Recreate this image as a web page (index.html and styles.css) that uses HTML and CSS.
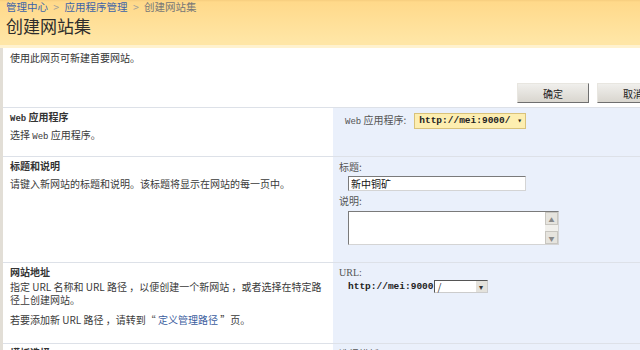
FILE: index.html
```html
<!DOCTYPE html>
<html>
    <head>
        <meta charset="utf-8" />
        <link rel="stylesheet" href="styles.css">
    </head>
    <body>
        <div id="header">
            <div id="crumbs">
                <a href="#">管理中心</a> <span class="sep">&gt;</span>
                <a href="#">应用程序管理</a> <span class="sep">&gt;</span>
                <span class="here">创建网站集</span>
            </div>
            <h1>创建网站集</h1>
        </div>
        <div id="page">
            <p class="intro">使用此网页可新建首要网站。</p>
            <div class="actions">
                <button class="btn">确定</button>
                <button class="btn">取消</button>
            </div>

            <div class="section s1">
                <div class="info">
                    <div class="title"><span class="lat">Web</span> 应用程序</div>
                    <div class="desc">选择 <span class="lat">Web</span> 应用程序。</div>
                </div>
                <div class="field">
                    <div class="inline">
                        <span class="lbl"><span class="lat">Web</span> 应用程序:</span>
                        <span class="picker">http://mei:9000/ <span class="caret">▾</span></span>
                    </div>
                </div>
            </div>

            <div class="section s2">
                <div class="info">
                    <div class="title">标题和说明</div>
                    <div class="desc">请键入新网站的标题和说明。该标题将显示在网站的每一页中。</div>
                </div>
                <div class="field">
                    <div class="lbl">标题:</div>
                    <input class="text" type="text" value="新中铜矿" />
                    <div class="lbl">说明:</div>
                    <div class="area">
                        <div class="area-body"></div>
                        <div class="scroll">
                            <span class="sbtn">▲</span>
                            <span class="sbtn">▼</span>
                        </div>
                    </div>
                </div>
            </div>

            <div class="section s3">
                <div class="info">
                    <div class="title">网站地址</div>
                    <div class="desc">指定 URL 名称和 URL 路径 ，以便创建一个新网站 ，或者选择在特定路径上创建网站。</div>
                    <div class="desc more">若要添加新 URL 路径 ，请转到“ <a href="#">定义管理路径</a> ”页。</div>
                </div>
                <div class="field">
                    <div class="lbl">URL:</div>
                    <div class="url">
                        <span class="host">http://mei:9000</span><span class="path">/<span class="drop">▾</span></span>
                    </div>
                </div>
            </div>

            <div class="section s4">
                <div class="info">
                    <div class="title">模板选择</div>
                </div>
                <div class="field">
                    <div class="lbl">选择模板:</div>
                </div>
            </div>
        </div>
    </body>
</html>
```

FILE: styles.css
```css
html {
    overflow: hidden;
}
body {
    margin: 0;
    background-color: #fff;
    color: #333;
    font-family: "Noto Sans CJK SC", "DejaVu Sans", sans-serif;
    font-size: 10px;
}
a {
    color: #3b5d9e;
    text-decoration: none;
}

/* Header band */
#header {
    height: 45px;
    padding: 0 0 0 6px;
    background: linear-gradient(#f6cd7e 0, #ffd98a 2px, #ffe6a6 42px);
    border-bottom: 3px solid #fff2cf;
}
#crumbs {
    height: 14px;
    line-height: 14px;
    font-size: 10.5px;
    color: #7a7a7a;
}
#crumbs a {
    color: #3d63a8;
}
#crumbs .sep {
    color: #9a9a9a;
    margin: 0 3px;
}
#crumbs .here {
    color: #777;
}
h1 {
    margin: 0;
    font-size: 17px;
    font-weight: normal;
    line-height: 24px;
    color: #2d2d2d;
}

#page {
    border-left: 3px solid #e2ded6;
}
.intro {
    margin: 0;
    padding: 3px 0 0 7px;
    height: 22px;
    line-height: 14px;
}
.lat {
    font-family: "Liberation Mono", monospace;
    font-size: 9px;
}

/* Buttons */
.actions {
    display: flex;
    gap: 8px;
    padding: 10px 0 0 514px;
    height: 24px;
}
.btn {
    flex: none;
    width: 72px;
    height: 20px;
    padding: 0;
    font-family: inherit;
    font-size: 10px;
    color: #222;
    background: linear-gradient(#f0efec, #d9d6cf);
    border: 1px solid;
    border-color: #e8e6e0 #6f6f6f #6f6f6f #e8e6e0;
}

/* Sections */
.section {
    display: grid;
    grid-template-columns: 330px 1fr;
    border-top: 1px solid #dde1e8;
}
.info {
    padding: 2px 0 0 7px;
    line-height: 13px;
}
.info .title {
    font-weight: bold;
    color: #333;
    margin-bottom: 2px;
}
.info .desc {
    width: 312px;
    color: #3a3a3a;
}
.s2 .info .title {
    margin-bottom: 5px;
}
.info .more {
    margin-top: 7px;
}
.field {
    background-color: #eaf0fb;
    padding: 3px 0 0 6px;
    line-height: 13px;
}
.lbl {
    color: #555;
}
.s1 {
    height: 48px;
}
.s2 {
    height: 105px;
}
.s3 {
    height: 80px;
}
.s4 {
    height: 40px;
}
.s1 .field {
    padding: 5px 0 0 12px;
}
.inline {
    display: flex;
    align-items: center;
    gap: 8px;
}
.picker {
    display: inline-block;
    height: 14px;
    line-height: 14px;
    padding: 0 3px 0 4px;
    background-color: #fdeeb0;
    border: 1px solid #d9c27a;
    font-family: "Liberation Mono", monospace;
    font-weight: bold;
    font-size: 9.5px;
    color: #222;
}
.picker .caret {
    font-size: 8px;
    margin-left: 1px;
}

.text {
    display: block;
    box-sizing: border-box;
    width: 178px;
    height: 15px;
    margin: 3px 0 3px 9px;
    padding: 0 2px;
    border: 1px solid;
    border-color: #7a7a7a #d4d4d4 #d4d4d4 #7a7a7a;
    font-family: inherit;
    font-size: 10px;
    color: #111;
}
.area {
    display: flex;
    box-sizing: border-box;
    width: 211px;
    height: 34px;
    margin: 4px 0 0 9px;
    border: 1px solid;
    border-color: #7a7a7a #d4d4d4 #d4d4d4 #7a7a7a;
    background-color: #fff;
}
.area-body {
    flex: 1;
}
.scroll {
    display: flex;
    flex-direction: column;
    justify-content: space-between;
    width: 13px;
    background-color: #f1f0ec;
}
.sbtn {
    height: 13px;
    line-height: 13px;
    text-align: center;
    font-size: 6px;
    color: #888;
    background-color: #e6e4de;
    border: 1px solid #c8c6c0;
    box-sizing: border-box;
}

.s3 .field .lbl {
    font-family: "Liberation Serif", serif;
}
.url {
    display: flex;
    align-items: center;
    margin: 1px 0 0 9px;
}
.host {
    font-family: "Liberation Mono", monospace;
    font-weight: bold;
    font-size: 9.5px;
    color: #222;
}
.path {
    display: flex;
    justify-content: space-between;
    align-items: center;
    box-sizing: border-box;
    width: 54px;
    height: 13px;
    padding: 0 0 0 3px;
    border: 1px solid;
    border-color: #555 #ccc #ccc #555;
    background-color: #fff;
    line-height: 11px;
}
.drop {
    width: 11px;
    height: 11px;
    font-size: 8px;
    line-height: 11px;
    text-align: center;
    background-color: #e4e2dc;
}
```
